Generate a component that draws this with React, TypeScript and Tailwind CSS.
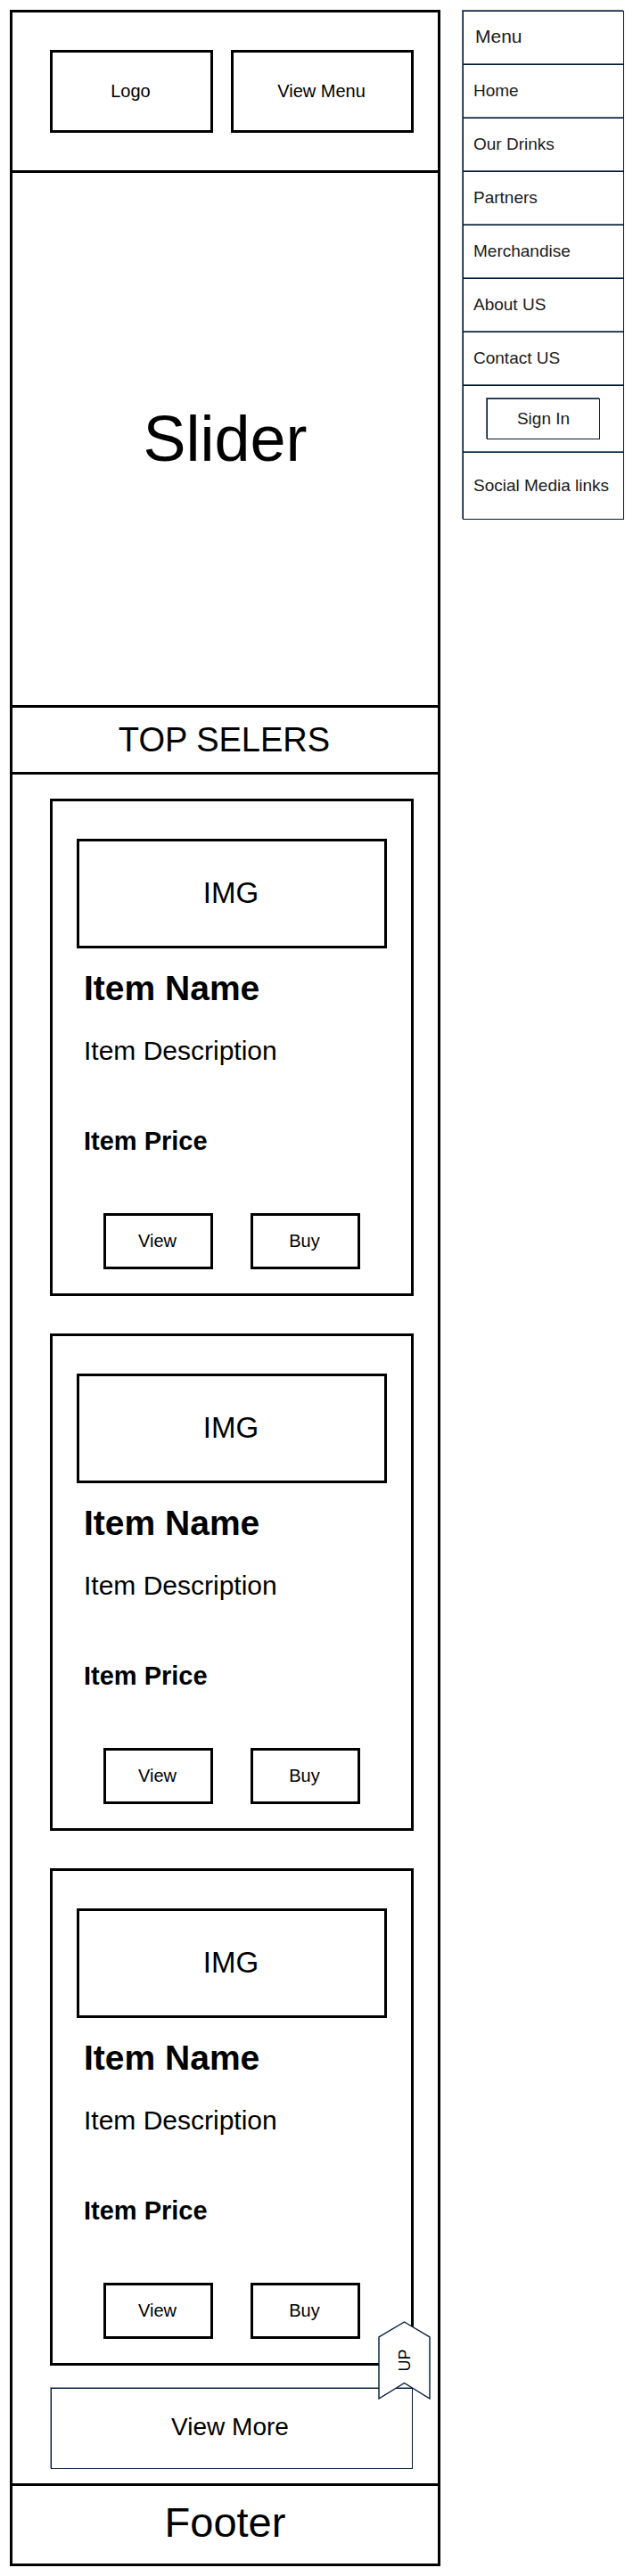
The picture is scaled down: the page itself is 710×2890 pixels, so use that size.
const menuLinks = ["Home", "Our Drinks", "Partners", "Merchandise", "About US", "Contact US"];
const items = [1, 2, 3];

function ItemCard() {
  return (
    <article className="border-3 border-black pt-[42px] pb-[27px]">
      <div className="mx-[27px] flex h-[123px] items-center justify-center border-3 border-black pr-0.5 pb-0.5 text-[33px]">
        IMG
      </div>
      <div className="px-[35px]">
        <h3 className="mt-[25px] text-[39px] leading-10 font-bold">Item Name</h3>
        <p className="mt-8 text-[30px] leading-9">Item Description</p>
        <p className="mt-[65px] text-[29px] leading-9 font-bold">Item Price</p>
      </div>
      <div className="mx-[57px] mt-[63px] grid grid-cols-2 gap-[42px]">
        <button className="h-[63px] border-3 border-black pr-0.5 pb-0.5 text-[20px]">View</button>
        <button className="h-[63px] border-3 border-black pr-0.5 pb-0.5 text-[20px]">Buy</button>
      </div>
    </article>
  );
}

function UpButton() {
  return (
    <button
      aria-label="UP"
      className="absolute right-2 bottom-[94px] flex h-22 w-[59px] items-center justify-center"
    >
      <svg viewBox="0 0 59 88" className="absolute inset-0 h-full w-full" aria-hidden="true">
        <path
          d="M29.5 1 L58 18 V87 L29.5 69.5 L1 87 V18 Z"
          fill="white"
          stroke="#001a38"
          strokeWidth="1.4"
        />
      </svg>
      <span className="relative -rotate-90 text-[18px] leading-5">UP</span>
    </button>
  );
}

export default function App() {
  return (
    <div className="flex min-h-screen items-start gap-[25px] bg-white py-[11px] pr-2.5 pl-[11px] font-['Liberation_Sans',Arial,sans-serif] text-black">
      <div className="min-w-0 flex-1 border-3 border-black">
        <header className="grid grid-cols-[183fr_205fr] gap-5 border-b-3 border-black pt-[42px] pr-[27px] pb-[42px] pl-[42px]">
          <div className="flex h-[93px] items-center justify-center border-3 border-black pr-0.5 pb-0.5 text-[20px]">
            Logo
          </div>
          <button className="h-[93px] border-3 border-black pr-0.5 pb-0.5 text-[20px]">
            View Menu
          </button>
        </header>

        <section className="flex h-[600px] items-center justify-center border-b-3 border-black pb-0.5 text-[72px]">
          Slider
        </section>

        <h2 className="flex h-[75px] items-center justify-center border-b-3 border-black pr-0.5 text-[38px]">
          TOP SELERS
        </h2>

        <main className="relative pt-[27px] pr-[27px] pb-4 pl-[42px]">
          <div className="flex flex-col gap-[42px]">
            {items.map((id) => (
              <ItemCard key={id} />
            ))}
          </div>
          <div className="mt-[25px] px-px">
            <button className="h-[91px] w-full border border-[#001a38] pr-1 pb-1 text-[28px] shadow-[-1px_-1px_0_#8d99a6]">
              View More
            </button>
          </div>
          <UpButton />
        </main>

        <footer className="flex h-[90px] items-center justify-center border-t-3 border-black pb-1 text-[47px]">
          Footer
        </footer>
      </div>

      <nav
        aria-label="Menu"
        className="mt-px w-[181px] shrink-0 border border-[#001a38] text-[19px] text-[#1a1a1a] shadow-[-1px_-1px_0_#5d6c7d]"
      >
        <h2 className="flex h-[59px] items-center pb-1 pl-[13px] text-[21px]">Menu</h2>
        <ul>
          {menuLinks.map((label) => (
            <li key={label} className="border-t border-[#001a38] shadow-[0_-1px_0_#5d6c7d]">
              <a href="#" className="flex h-[59px] items-center pl-[11px]">
                {label}
              </a>
            </li>
          ))}
        </ul>
        <div className="flex h-[75px] items-center justify-center border-t border-[#001a38] shadow-[0_-1px_0_#5d6c7d]">
          <button className="h-[46px] w-[127px] border border-[#001a38] shadow-[-1px_-1px_0_#5d6c7d]">
            Sign In
          </button>
        </div>
        <a
          href="#"
          className="flex h-[75px] items-center border-t border-[#001a38] pl-[11px] shadow-[0_-1px_0_#5d6c7d]"
        >
          Social Media links
        </a>
      </nav>
    </div>
  );
}
